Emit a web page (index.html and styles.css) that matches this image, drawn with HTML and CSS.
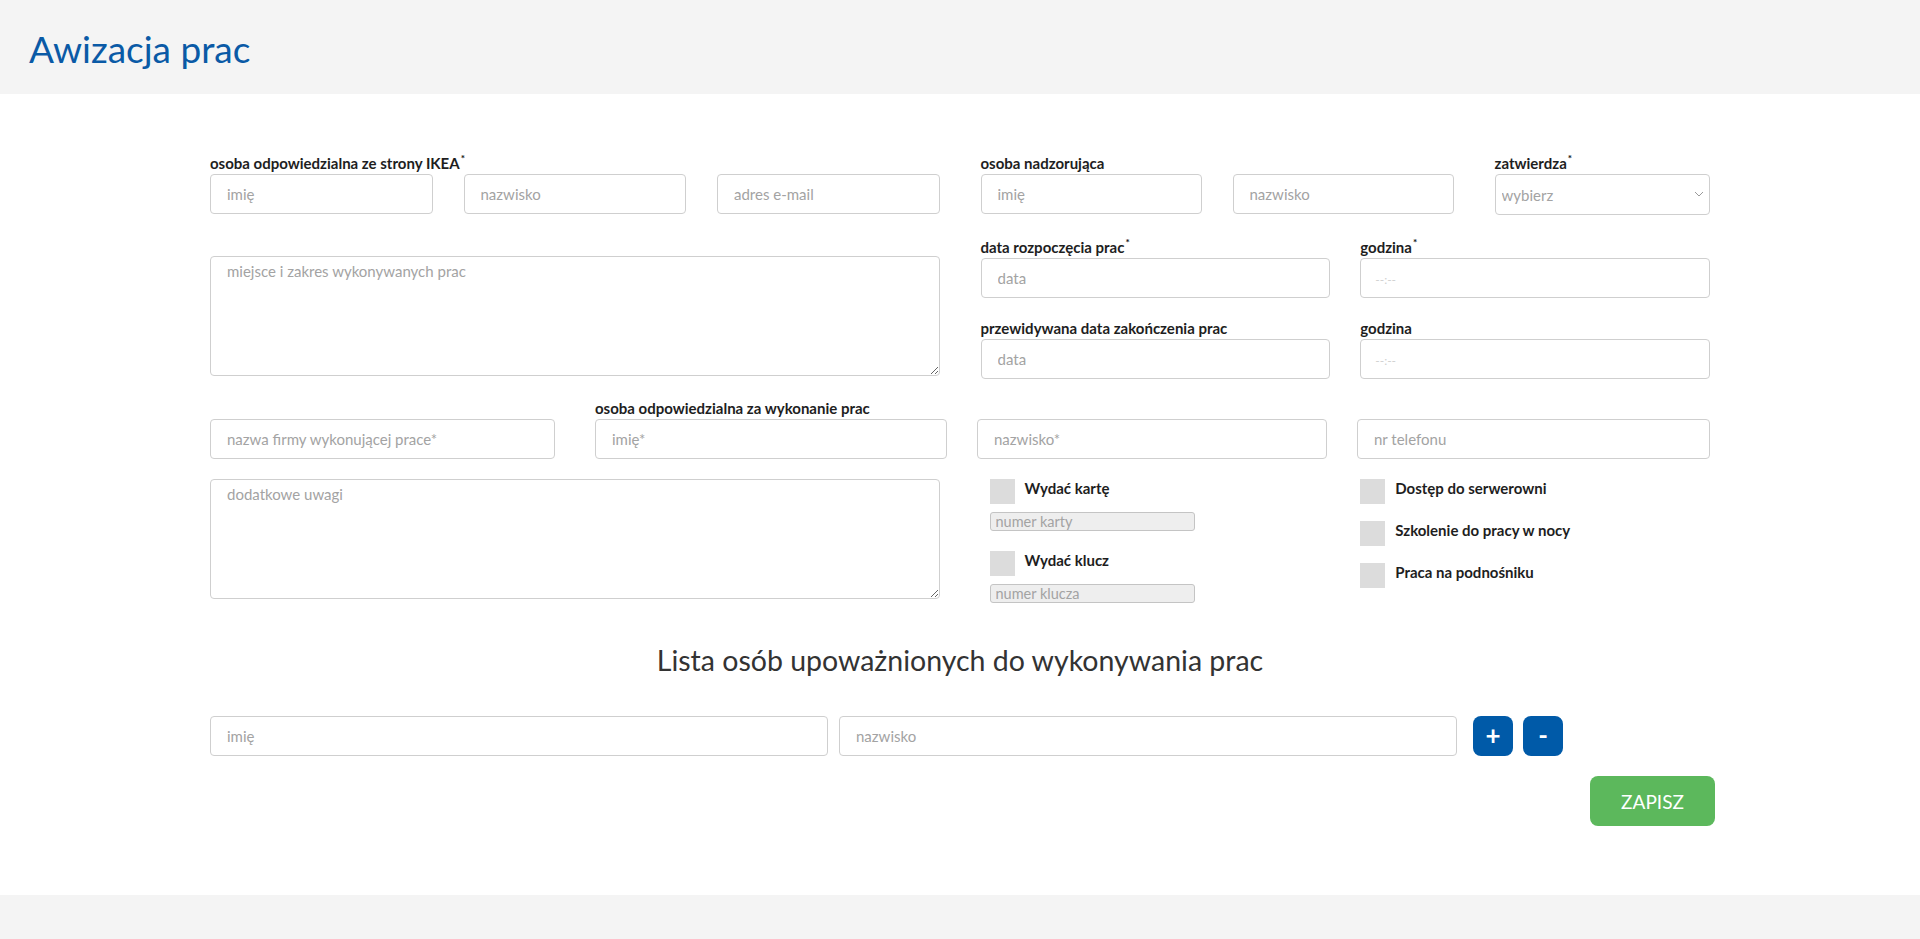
FILE: index.html
```html
<!DOCTYPE html>
<html lang="pl">
<head>
<meta charset="utf-8">
<title>Awizacja prac</title>
<link rel="stylesheet" href="styles.css">
</head>
<body>
<header class="top-bar">
  <h1 class="page-title">Awizacja prac</h1>
</header>
<main class="page">
  <form class="form">
    <section class="halves">
      <div class="half">
        <div class="grid3">
          <div class="fld"><label class="lbl">osoba odpowiedzialna ze strony IKEA<sup>*</sup></label><input class="inp" type="text" placeholder="imię"></div>
          <div class="fld"><span class="lbl"></span><input class="inp" type="text" placeholder="nazwisko"></div>
          <div class="fld"><span class="lbl"></span><input class="inp" type="text" placeholder="adres e-mail"></div>
        </div>
        <textarea class="area area-top" placeholder="miejsce i zakres wykonywanych prac"></textarea>
      </div>
      <div class="half">
        <div class="grid-sup">
          <div class="fld"><label class="lbl">osoba nadzorująca</label><input class="inp" type="text" placeholder="imię"></div>
          <div class="fld"><span class="lbl"></span><input class="inp" type="text" placeholder="nazwisko"></div>
          <div class="fld fld-approve"><label class="lbl">zatwierdza<sup>*</sup></label>
            <div class="select-wrap">
              <select class="sel"><option>wybierz</option></select>
              <svg class="chev" width="10" height="6" viewBox="0 0 10 6"><path d="M1 1 L5 5 L9 1" fill="none" stroke="#9a9a9a" stroke-width="1"/></svg>
            </div>
          </div>
        </div>
        <div class="grid2 row-gap1">
          <div class="fld"><label class="lbl">data rozpoczęcia prac<sup>*</sup></label><input class="inp" type="text" placeholder="data"></div>
          <div class="fld"><label class="lbl">godzina<sup>*</sup></label><input class="inp inp-time" type="text" placeholder="--:--"></div>
        </div>
        <div class="grid2 row-gap2">
          <div class="fld"><label class="lbl">przewidywana data zakończenia prac</label><input class="inp" type="text" placeholder="data"></div>
          <div class="fld"><label class="lbl">godzina</label><input class="inp inp-time" type="text" placeholder="--:--"></div>
        </div>
      </div>
    </section>

    <section class="grid4">
      <div class="fld fld-firm"><span class="lbl"></span><input class="inp" type="text" placeholder="nazwa firmy wykonującej prace*"></div>
      <div class="fld"><label class="lbl">osoba odpowiedzialna za wykonanie prac</label><input class="inp" type="text" placeholder="imię*"></div>
      <div class="fld"><span class="lbl"></span><input class="inp" type="text" placeholder="nazwisko*"></div>
      <div class="fld"><span class="lbl"></span><input class="inp" type="text" placeholder="nr telefonu"></div>
    </section>

    <section class="halves halves-c">
      <div class="half">
        <textarea class="area" placeholder="dodatkowe uwagi"></textarea>
      </div>
      <div class="half grid2">
        <div class="checks checks-left">
          <label class="chk"><span class="box"></span><span class="chk-text">Wydać kartę</span></label>
          <input class="mini" type="text" placeholder="numer karty">
          <label class="chk chk-second"><span class="box"></span><span class="chk-text">Wydać klucz</span></label>
          <input class="mini" type="text" placeholder="numer klucza">
        </div>
        <div class="checks checks-right">
          <label class="chk"><span class="box"></span><span class="chk-text">Dostęp do serwerowni</span></label>
          <label class="chk"><span class="box"></span><span class="chk-text">Szkolenie do pracy w nocy</span></label>
          <label class="chk"><span class="box"></span><span class="chk-text">Praca na podnośniku</span></label>
        </div>
      </div>
    </section>

    <h2 class="list-title">Lista osób upoważnionych do wykonywania prac</h2>

    <section class="list-row">
      <input class="inp list-inp" type="text" placeholder="imię">
      <input class="inp list-inp list-inp2" type="text" placeholder="nazwisko">
      <button type="button" class="sq-btn btn-plus">+</button>
      <button type="button" class="sq-btn btn-minus">-</button>
    </section>

    <div class="save-row">
      <button type="button" class="save-btn">ZAPISZ</button>
    </div>
  </form>
</main>
<footer class="bottom-bar"></footer>
</body>
</html>
```

FILE: styles.css
```css
* { box-sizing: border-box; }

html, body {
  margin: 0;
  padding: 0;
  background: #ffffff;
  font-family: Lato, "Open Sans", "Liberation Sans", sans-serif;
  color: #222;
}

.top-bar {
  background: #f4f4f4;
  height: 94px;
  display: flex;
  align-items: center;
  padding-left: 29px;
}

.page-title {
  margin: 0;
  font-size: 37px;
  font-weight: 400;
  color: #0a5aa6;
  line-height: 1;
  padding-top: 2px;
}

.page {
  padding: 59px 0 69px;
}

.form {
  width: 1500px;
  margin: 0 auto;
}

.halves {
  display: grid;
  grid-template-columns: 1fr 1fr;
  column-gap: 41px;
  align-items: start;
}

.fld {
  display: flex;
  flex-direction: column;
  min-width: 0;
}

.lbl {
  display: block;
  height: 20px;
  line-height: 20px;
  margin-bottom: 1px;
  font-size: 15px;
  font-weight: 700;
  color: #1e1e1e;
  white-space: nowrap;
}

.lbl sup {
  font-size: 10px;
  font-weight: 900;
  vertical-align: top;
  line-height: 11px;
  margin-left: 1px;
}

.inp {
  height: 40px;
  width: 100%;
  border: 1px solid #cfcfcf;
  border-radius: 4px;
  padding: 0 16px;
  font-family: inherit;
  font-size: 15px;
  color: #333;
  background: #fff;
  outline: none;
}

.inp::placeholder, .area::placeholder, .mini::placeholder {
  color: #a3a3a3;
  opacity: 1;
}

.inp-time::placeholder {
  color: #d0d0d0;
  font-size: 12px;
}

.inp-time { padding-left: 14px; }

.grid3 {
  display: grid;
  grid-template-columns: 1fr 1fr 1fr;
  column-gap: 31px;
}

.area {
  display: block;
  width: 100%;
  height: 120px;
  border: 1px solid #cfcfcf;
  border-radius: 4px;
  padding: 5px 16px;
  font-family: inherit;
  font-size: 15px;
  color: #333;
  outline: none;
  resize: both;
}

.area-top { margin-top: 42px; }

.grid-sup {
  display: grid;
  grid-template-columns: 221px 221px 1fr;
  column-gap: 31px;
}

.fld-approve { padding-left: 10px; }

.select-wrap {
  position: relative;
}

.sel {
  appearance: none;
  -webkit-appearance: none;
  width: 100%;
  height: 41px;
  border: 1px solid #cfcfcf;
  border-radius: 4px;
  padding: 0 6px;
  background: #fff;
  font-family: inherit;
  font-size: 15px;
  color: #a3a3a3;
  outline: none;
}

.chev {
  position: absolute;
  right: 6px;
  top: 17px;
}

.grid2 {
  display: grid;
  grid-template-columns: 1fr 1fr;
  column-gap: 30px;
}

.row-gap1 { margin-top: 22px; }
.row-gap2 { margin-top: 20px; }

.grid4 {
  display: grid;
  grid-template-columns: 355px 352px 350px 1fr;
  column-gap: 30px;
  margin-top: 19px;
}

.fld-firm { padding-right: 10px; }

.halves-c { margin-top: 20px; }

.checks {
  display: flex;
  flex-direction: column;
  align-items: flex-start;
}

.checks-left { padding-left: 9px; }
.checks-right { padding-left: 0; gap: 17px; }

.chk {
  display: flex;
  align-items: center;
  gap: 10px;
  height: 25px;
  cursor: pointer;
}

.box {
  width: 25px;
  height: 25px;
  background: #dcdcdc;
  flex: none;
}

.chk-text {
  font-size: 15px;
  font-weight: 700;
  color: #1e1e1e;
  padding-bottom: 8px;
}

.chk-second { margin-top: 20px; }

.mini {
  margin-top: 8px;
  width: 205px;
  height: 19px;
  border: 1px solid #c4c4c4;
  border-radius: 3px;
  background: #eeeeee;
  padding: 0 5px;
  font-family: inherit;
  font-size: 14.5px;
  outline: none;
}

.list-title {
  margin: 36px 0 0;
  text-align: center;
  font-size: 28.5px;
  line-height: 42px;
  font-weight: 400;
  color: #333;
}

.list-row {
  display: flex;
  align-items: center;
  margin-top: 35px;
}

.list-inp {
  width: 618px;
  height: 40px;
}

.list-inp2 { margin-left: 11px; }

.sq-btn {
  width: 40px;
  height: 40px;
  border: none;
  border-radius: 8px;
  background: #005aa8;
  color: #fff;
  font-family: inherit;
  font-size: 26px;
  font-weight: 700;
  line-height: 1;
  padding: 0 0 3px;
  cursor: pointer;
}

.btn-plus { margin-left: 16px; }
.btn-minus { margin-left: 10px; }

.save-row {
  display: flex;
  justify-content: flex-end;
  margin-top: 20px;
  margin-right: -5px;
}

.save-btn {
  width: 125px;
  height: 50px;
  border: none;
  border-radius: 8px;
  background: #5cb85c;
  color: #fff;
  font-family: inherit;
  font-size: 19px;
  cursor: pointer;
}

.bottom-bar {
  background: #f4f4f4;
  height: 47px;
}
```
